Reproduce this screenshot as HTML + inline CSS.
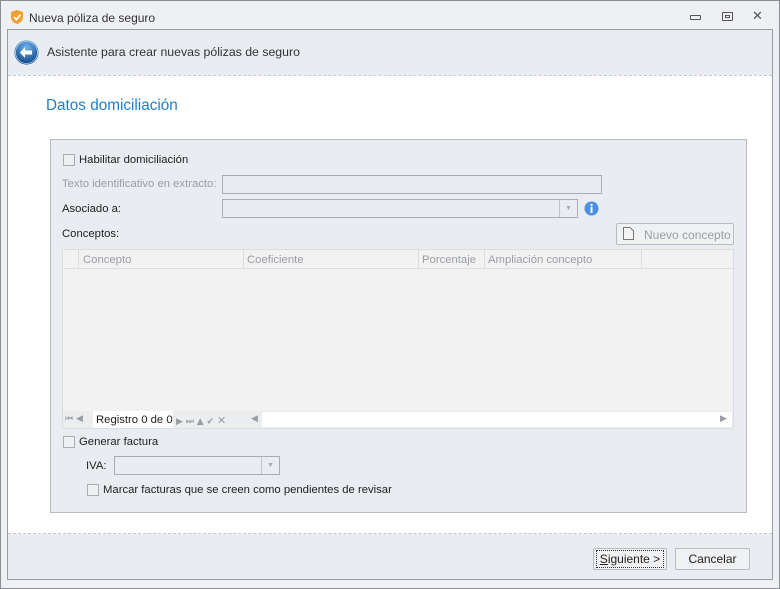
<!DOCTYPE html>
<html><head><meta charset="utf-8"><style>
*{box-sizing:border-box;margin:0;padding:0}
body{width:780px;height:589px;overflow:hidden;font-family:"Liberation Sans",sans-serif;font-size:11.3px;color:#222;background:#eceef1;position:relative}
.a{position:absolute;white-space:nowrap}
.t{margin-top:1px}
.win{left:0;top:0;width:780px;height:589px;border:1px solid #8a8f96;background:#eef0f3}
.frame{left:7px;top:29px;width:766px;height:551px;border:1px solid #9a9ea4;background:#e9ecf0}
.cb{width:12px;height:12px;border:1px solid #a9acb0;background:#eef0f2}
.inp{border:1px solid #a9adb2;background:#e9ecf0}
.gray{color:#9a9ea4}
.btn{border:1px solid #b8bcc1;border-radius:2px;background:#f0f1f3;text-align:center}
.nav{font-size:9px;color:#9a9ea4;font-family:"DejaVu Sans",sans-serif}
</style></head><body>
<div class="a win"></div>
<svg class="a" style="left:10px;top:9px" width="14" height="16" viewBox="0 0 14 16"><path d="M7 1L13 3V8C13 12 10 14 7 15C4 14 1 12 1 8V3Z" fill="#f0a030"/><path d="M4 8L6.5 10.5L10.5 5.5" stroke="#fff" stroke-width="1.8" fill="none"/></svg>
<div class="a" style="left:29px;top:11px;font-size:12px;color:#333">Nueva póliza de seguro</div>
<div class="a" style="left:690px;top:15px;width:11px;height:5px;border:1px solid #555;border-radius:1px"></div>
<div class="a" style="left:722px;top:12px;width:11px;height:9px;border:1px solid #555;border-radius:1px"><div style="margin:2px 2px;width:5px;height:3px;border:1px solid #555"></div></div>
<div class="a" style="left:752px;top:9px;font-size:13px;color:#555;font-family:'DejaVu Sans'">✕</div>
<div class="a frame"></div>
<svg class="a" style="left:14px;top:40px" width="25" height="25" viewBox="0 0 25 25"><defs><radialGradient id="g" cx="50%" cy="30%" r="70%"><stop offset="0" stop-color="#6fb6f0"/><stop offset="1" stop-color="#0b3f85"/></radialGradient></defs><circle cx="12.5" cy="12.5" r="12" fill="url(#g)"/><circle cx="12.5" cy="12.5" r="11" fill="none" stroke="#bcdcf5" stroke-width="0.8"/><path d="M11 7L6 12.5L11 18V14.5H18V10.5H11Z" fill="#fff"/></svg>
<div class="a" style="left:47px;top:45px;font-size:12.3px;color:#333">Asistente para crear nuevas pólizas de seguro</div>
<div class="a" style="left:8px;top:75px;width:764px;height:459px;background:#fff;border-top:1px dashed #c4c7cb;border-bottom:1px dashed #c4c7cb"></div>
<div class="a" style="left:46px;top:97px;font-size:15.3px;color:#1e7fc9">Datos domiciliación</div>
<div class="a" style="left:50px;top:139px;width:697px;height:374px;border:1px solid #b9bcc1;background:#e9ecf0"></div>
<div class="a cb" style="left:63px;top:154px"></div>
<div class="a t" style="left:79px;top:153px">Habilitar domiciliación</div>
<div class="a gray t" style="left:62px;top:177px">Texto identificativo en extracto:</div>
<div class="a inp" style="left:222px;top:175px;width:380px;height:19px"></div>
<div class="a t" style="left:62px;top:202px">Asociado a:</div>
<div class="a inp" style="left:222px;top:199px;width:356px;height:19px"><div style="position:absolute;right:0;top:0;width:18px;height:17px;border-left:1px solid #c0c3c7;color:#aaa;font-size:7px;text-align:center;line-height:17px">▼</div></div>
<svg class="a" style="left:584px;top:201px" width="15" height="15"><circle cx="7.5" cy="7.5" r="7" fill="#4a8fe0"/><rect x="6.5" y="6" width="2" height="6" fill="#fff"/><circle cx="7.5" cy="4" r="1.2" fill="#fff"/></svg>
<div class="a t" style="left:62px;top:227px">Conceptos:</div>
<div class="a btn" style="left:616px;top:223px;width:118px;height:22px"></div>
<svg class="a" style="left:623px;top:227px" width="11" height="13"><path d="M0.5 0.5H7L10.5 4V12.5H0.5Z" fill="#f4f4f4" stroke="#777"/></svg>
<div class="a gray" style="left:644px;top:228px;font-size:12px">Nuevo concepto</div>
<div class="a" style="left:62px;top:249px;width:672px;height:180px;border:1px solid #dcdde0;background:#f2f2f2"></div>
<div class="a" style="left:63px;top:250px;width:670px;height:19px;background:#f2f2f2;border-bottom:1px solid #dcdde0"></div>
<div class="a" style="left:78px;top:250px;width:1px;height:19px;background:#dcdde0"></div>
<div class="a" style="left:243px;top:250px;width:1px;height:19px;background:#dcdde0"></div>
<div class="a" style="left:418px;top:250px;width:1px;height:19px;background:#dcdde0"></div>
<div class="a" style="left:484px;top:250px;width:1px;height:19px;background:#dcdde0"></div>
<div class="a" style="left:641px;top:250px;width:1px;height:19px;background:#dcdde0"></div>
<div class="a gray t" style="left:83px;top:253px">Concepto</div>
<div class="a gray t" style="left:247px;top:253px">Coeficiente</div>
<div class="a gray t" style="left:422px;top:253px">Porcentaje</div>
<div class="a gray t" style="left:488px;top:253px">Ampliación concepto</div>
<div class="a" style="left:63px;top:411px;width:670px;height:17px;background:#ecedef"></div>
<div class="a" style="left:262px;top:412px;width:470px;height:15px;background:#fff"></div>
<div class="a" style="left:93px;top:411px;width:80px;height:17px;background:#fff"></div>
<div class="a nav" style="left:65px;top:414px">⏮ ◀</div>
<div class="a t" style="left:96px;top:413px">Registro 0 de 0</div>
<div class="a nav" style="left:176px;top:414px">▶ ⏭ ▲ ✔ <b style="font-size:11px">✕</b></div>
<div class="a nav" style="left:251px;top:414px">◀</div>
<div class="a nav" style="left:720px;top:414px">▶</div>
<div class="a cb" style="left:63px;top:436px"></div>
<div class="a t" style="left:79px;top:435px">Generar factura</div>
<div class="a t" style="left:86px;top:459px">IVA:</div>
<div class="a inp" style="left:114px;top:456px;width:166px;height:19px"><div style="position:absolute;right:0;top:0;width:18px;height:17px;border-left:1px solid #c0c3c7;color:#aaa;font-size:7px;text-align:center;line-height:17px">▼</div></div>
<div class="a cb" style="left:87px;top:484px"></div>
<div class="a t" style="left:103px;top:483px">Marcar facturas que se creen como pendientes de revisar</div>
<div class="a btn" style="left:593px;top:548px;width:74px;height:22px;line-height:20px;font-size:12px"><span style="border:1px dotted #333;padding:1px 3px;white-space:nowrap"><u>S</u>iguiente &gt;</span></div>
<div class="a btn" style="left:675px;top:548px;width:75px;height:22px;line-height:20px;font-size:12px">Cancelar</div>
</body></html>
